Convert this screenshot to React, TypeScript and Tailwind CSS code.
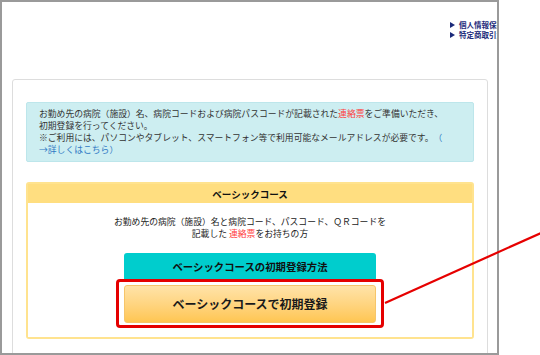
import React from "react";

const jp = "font-['Noto_Sans_CJK_JP','Noto_Sans',sans-serif]";

function Tri() {
  return (
    <span className="inline-block w-0 h-0 border-l-[5px] border-l-[#1b2a7a] border-y-[3px] border-y-transparent mr-[4px] align-middle" />
  );
}

export default function App() {
  return (
    <div className={`relative w-[540px] h-[355px] bg-white overflow-hidden ${jp}`}>
      <div className="w-[499px] h-[355px] border-2 border-[#9a9a9a] overflow-hidden bg-white">
        {/* top links */}
        <div className="mt-[18px] ml-[448px] text-[7.5px] leading-[10px] font-bold text-[#1b2a7a] whitespace-nowrap">
          <div className="flex items-center">
            <Tri />
            <span>個人情報保護方針</span>
          </div>
          <div className="flex items-center">
            <Tri />
            <span>特定商取引法に基づく表記</span>
          </div>
        </div>

        {/* card */}
        <div className="mt-[39px] ml-[10px] w-[476px] border border-[#dddddd] rounded-t-[3px] px-[13px] pt-[22px] pb-[30px]">
          {/* info box */}
          <div className="border border-[#bde6eb] bg-[#cdeef1] rounded-[2px] px-[12px] py-[4.5px] text-[8.8px] leading-[12.3px] text-[#333333] whitespace-nowrap">
            <div>
              お勤め先の病院（施設）名、病院コードおよび病院パスコードが記載された
              <span className="text-[#ff3b3b]">連絡票</span>
              をご準備いただき、
            </div>
            <div>初期登録を行ってください。</div>
            <div>
              ※ご利用には、パソコンやタブレット、スマートフォン等で利用可能なメールアドレスが必要です。
              <span className="text-[#2f78c4]">　（</span>
            </div>
            <div className="text-[#2f78c4]">→詳しくはこちら）</div>
          </div>

          {/* basic course box */}
          <div className="mt-[20px] border-2 border-[#ffe38f] rounded-[3px]">
            <div className="h-[19px] bg-[#ffde80] flex items-center justify-center text-[9.5px] font-bold text-[#111111]">
              ベーシックコース
            </div>
            <div className="pt-[12.5px] pb-[9px] bg-white">
              <div className="text-center text-[8.8px] leading-[12.3px] text-[#222222]">
                <div>お勤め先の病院（施設）名と病院コード、パスコード、ＱＲコードを</div>
                <div>
                  記載した <span className="text-[#ff3b3b]">連絡票</span>をお持ちの方
                </div>
              </div>
              <div className="mt-[13px] mx-auto w-[252px] h-[30px] bg-[#00cdcd] rounded-t-[3px] flex justify-center pt-[7px] text-[10.4px] leading-[14px] font-bold text-[#111111]">
                ベーシックコースの初期登録方法
              </div>
              <div className="relative -mt-[4px] mx-auto w-[268px] border-[3px] border-[#e50000] rounded-[4px] bg-white pt-[3px] pb-[2px] px-[5px]">
                <div className="h-[38px] rounded-[3px] border border-[#f6c56a] bg-linear-to-b from-[#ffe3a8] to-[#ffc651] flex items-center justify-center text-[12px] font-bold text-[#1a1a1a]">
                  ベーシックコースで初期登録
                </div>
              </div>
            </div>
          </div>
        </div>
      </div>

      {/* annotation line */}
      <svg className="absolute inset-0 pointer-events-none" width="540" height="355" viewBox="0 0 540 355">
        <line x1="385" y1="303" x2="541" y2="233" stroke="#e60000" strokeWidth="2.2" />
      </svg>
    </div>
  );
}
